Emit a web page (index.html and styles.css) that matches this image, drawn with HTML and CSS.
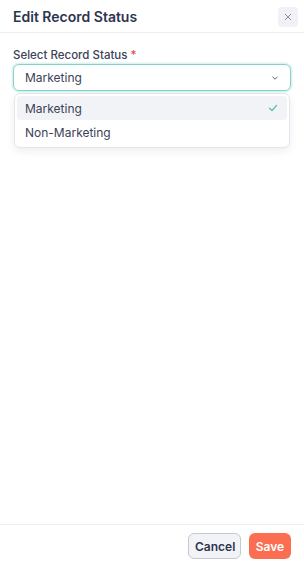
FILE: index.html
```html
<!DOCTYPE html>
<html lang="en">
<head>
    <meta charset="UTF-8">
    <meta name="viewport" content="width=device-width, initial-scale=1.0">
    <title>Edit Record Status</title>
    <link rel="stylesheet" href="styles.css">
</head>
<body>
    <div class="modal">
        <div class="modal-header">
            <h1>Edit Record Status</h1>
            <button class="close-btn" aria-label="Close">
                <svg width="10" height="10" viewBox="0 0 10 10">
                    <path d="M2.3 2.3 L7.7 7.7 M7.7 2.3 L2.3 7.7" stroke="#8a90a2" stroke-width="1" stroke-linecap="round"/>
                </svg>
            </button>
        </div>

        <div class="modal-body">
            <label class="field-label">Select Record Status <span class="required">*</span></label>
            <div class="select-wrap">
                <div class="select-box">
                    <span>Marketing</span>
                    <svg width="10" height="10" viewBox="0 0 10 10">
                        <path d="M2.8 4 L5 6.2 L7.2 4" fill="none" stroke="#5d6378" stroke-width="1" stroke-linecap="round" stroke-linejoin="round"/>
                    </svg>
                </div>
                <ul class="dropdown">
                    <li class="option selected">
                        <span>Marketing</span>
                        <svg width="12" height="12" viewBox="0 0 12 12">
                            <path d="M2.5 6.2 L5 8.5 L9.5 3.5" fill="none" stroke="#5fbdb1" stroke-width="1.2" stroke-linecap="round" stroke-linejoin="round"/>
                        </svg>
                    </li>
                    <li class="option">
                        <span>Non-Marketing</span>
                    </li>
                </ul>
            </div>
        </div>

        <div class="modal-footer">
            <button class="btn btn-cancel">Cancel</button>
            <button class="btn btn-save">Save</button>
        </div>
    </div>
</body>
</html>
```

FILE: styles.css
```css
* {
    box-sizing: border-box;
}

body {
    font-family: Inter, "Noto Sans", sans-serif;
    background-color: #ffffff;
    margin: 0;
    color: #3c4257;
}

.modal {
    display: flex;
    flex-direction: column;
    height: 563px;
}

.modal-header {
    display: flex;
    justify-content: space-between;
    align-items: center;
    height: 33px;
    padding: 0 6px 0 13px;
    border-bottom: 1px solid #eceef2;
}

.modal-header h1 {
    margin: 0;
    font-size: 14px;
    font-weight: 600;
    color: #2e3550;
}

.close-btn {
    display: flex;
    align-items: center;
    justify-content: center;
    width: 20px;
    height: 20px;
    border: none;
    border-radius: 4px;
    background-color: #f1f2f6;
    padding: 0;
    margin-top: 1px;
}

.modal-body {
    flex: 1;
    padding: 15px 13px 0;
}

.field-label {
    display: block;
    font-size: 11.5px;
    font-weight: 500;
    color: #3c4257;
    line-height: 14px;
    margin-bottom: 2px;
}

.required {
    color: #e5484d;
}

.select-box {
    display: flex;
    justify-content: space-between;
    align-items: center;
    height: 27px;
    padding: 0 10px 0 11px;
    border: 1.5px solid #82d3c9;
    border-radius: 6px;
    box-shadow: 0 0 0 1.5px #dcf3ef;
    font-size: 12px;
    color: #3c4257;
}

.dropdown {
    list-style: none;
    margin: 2px 1px 0;
    padding: 2px;
    border: 1px solid #e3e6ec;
    border-radius: 6px;
    box-shadow: 0 3px 8px rgba(30, 40, 70, 0.08);
    background-color: #ffffff;
}

.option {
    display: flex;
    justify-content: space-between;
    align-items: center;
    height: 24px;
    padding: 0 8px 0 8px;
    font-size: 12px;
    color: #3c4257;
    border-radius: 4px;
}

.option:last-child {
    height: 25px;
}

.option.selected {
    background-color: #f2f3f6;
}

.modal-footer {
    display: flex;
    justify-content: flex-end;
    gap: 8px;
    height: 39px;
    padding: 8px 13px 0;
    border-top: 1px solid #eceef2;
}

.btn {
    font-family: Inter, "Noto Sans", sans-serif;
    font-size: 12px;
    font-weight: 600;
    height: 26px;
    border-radius: 6px;
    cursor: pointer;
}

.btn-cancel {
    width: 53px;
    background-color: #f2f3f6;
    border: 1px solid #c3c8d2;
    color: #2e3550;
}

.btn-save {
    width: 42px;
    background-color: #fb6e52;
    border: none;
    color: #ffffff;
}
```
